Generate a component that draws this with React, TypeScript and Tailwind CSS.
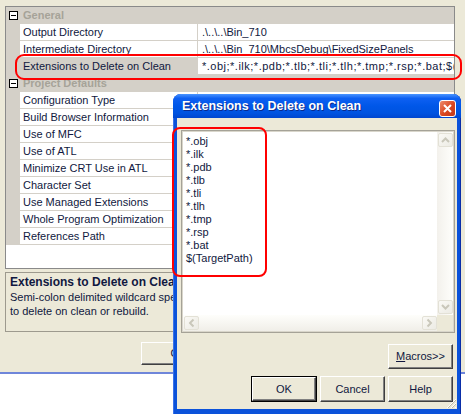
import React from "react";

const FONT = "font-['Liberation_Sans',Arial,sans-serif]";
const INK = "text-[#101840]";

type GridRow =
  | { kind: "cat"; label: string }
  | { kind: "prop"; name: string; value?: string; selected?: boolean };

const rows: GridRow[] = [
  { kind: "cat", label: "General" },
  { kind: "prop", name: "Output Directory", value: ".\\..\\..\\Bin_710" },
  {
    kind: "prop",
    name: "Intermediate Directory",
    value: ".\\..\\..\\Bin_710\\MbcsDebug\\FixedSizePanels",
  },
  {
    kind: "prop",
    name: "Extensions to Delete on Clean",
    value: "*.obj;*.ilk;*.pdb;*.tlb;*.tli;*.tlh;*.tmp;*.rsp;*.bat;$(TargetPath)",
    selected: true,
  },
  { kind: "cat", label: "Project Defaults" },
  { kind: "prop", name: "Configuration Type" },
  { kind: "prop", name: "Build Browser Information" },
  { kind: "prop", name: "Use of MFC" },
  { kind: "prop", name: "Use of ATL" },
  { kind: "prop", name: "Minimize CRT Use in ATL" },
  { kind: "prop", name: "Character Set" },
  { kind: "prop", name: "Use Managed Extensions" },
  { kind: "prop", name: "Whole Program Optimization" },
  { kind: "prop", name: "References Path" },
];

const extensions = [
  "*.obj",
  "*.ilk",
  "*.pdb",
  "*.tlb",
  "*.tli",
  "*.tlh",
  "*.tmp",
  "*.rsp",
  "*.bat",
  "$(TargetPath)",
];

function MinusBox() {
  return (
    <div className="flex h-[9px] w-[9px] items-center justify-center border border-[#000000] bg-white">
      <div className="h-[1px] w-[5px] bg-black" />
    </div>
  );
}

function Row({ row }: { row: GridRow }) {
  if (row.kind === "cat") {
    return (
      <div className="flex h-[17px]">
        <div className="flex w-[14px] shrink-0 items-center justify-center bg-[#D4D0C8]">
          <MinusBox />
        </div>
        <div className="flex-1 bg-[#D4D0C8] pl-[3px] text-[11px] font-bold leading-[17px] text-[#A6A398]">
          {row.label}
        </div>
      </div>
    );
  }
  return (
    <div className="flex h-[17px]">
      <div className="w-[14px] shrink-0 bg-[#D4D0C8]" />
      <div
        className={`w-[178px] shrink-0 border-b border-r border-[#D4D0C8] pl-[3px] text-[11px] leading-[16px] whitespace-nowrap ${INK} ${
          row.selected ? "bg-[#D4D0C8]" : "bg-white"
        }`}
      >
        {row.name}
      </div>
      <div
        className={`flex-1 overflow-hidden whitespace-nowrap border-b border-[#D4D0C8] pl-[4px] text-[11px] leading-[16px] ${INK} ${
          row.selected ? "tracking-[0.5px]" : ""
        }`}
      >
        {row.value}
      </div>
    </div>
  );
}

function ClassicButton({
  label,
  underline,
  isDefault,
  className = "",
}: {
  label: string;
  underline?: number;
  isDefault?: boolean;
  className?: string;
}) {
  const text =
    underline === undefined ? (
      label
    ) : (
      <>
        {label.slice(0, underline)}
        <span className="underline">{label[underline]}</span>
        {label.slice(underline + 1)}
      </>
    );
  return (
    <div className={`${isDefault ? "border border-black" : ""} ${className}`}>
      <div className="flex h-full w-full items-center justify-center border border-b-[#404040] border-l-white border-r-[#404040] border-t-white bg-[#ECE9D8] shadow-[inset_-1px_-1px_0_#808080] text-[11px] text-[#101840]">
        {text}
      </div>
    </div>
  );
}

function Chevron({ dir }: { dir: "up" | "down" | "left" | "right" }) {
  const rot = { up: "rotate-0", down: "rotate-180", left: "-rotate-90", right: "rotate-90" }[dir];
  return (
    <svg width="9" height="6" viewBox="0 0 9 6" className={rot}>
      <path d="M1 5 L4.5 1.5 L8 5" fill="none" stroke="#C9C7BA" strokeWidth="2" />
    </svg>
  );
}

function ScrollBtn({ dir }: { dir: "up" | "down" | "left" | "right" }) {
  return (
    <div className="flex h-[16px] w-[16px] items-center justify-center">
      <div className="flex h-[14px] w-[15px] items-center justify-center rounded-[2px] border border-[#E3E1D6] bg-[linear-gradient(135deg,#FAF9F5,#ECEBE4)]">
        <Chevron dir={dir} />
      </div>
    </div>
  );
}

function Dialog() {
  return (
    <div className="absolute left-[173px] top-[94px] flex h-[320px] w-[288px] flex-col rounded-t-[8px] bg-[#0B52DA] shadow-[inset_1px_0_0_#3A72E8,inset_-1px_0_0_#0A2EA8]">
      <div className="flex h-[24px] items-start justify-between rounded-t-[8px] bg-[linear-gradient(180deg,#4A95FF_0%,#0E60F2_18%,#0057E8_50%,#0053E0_80%,#0046CF_100%)] pl-[9px] pr-[5px]">
        <span className="mt-[5px] text-[12.5px] font-bold leading-[15px] text-white [text-shadow:1px_1px_0_#0B2A8C]">
          Extensions to Delete on Clean
        </span>
        <div className="mt-[6px] flex h-[17px] w-[17px] items-center justify-center rounded-[3px] border border-white bg-[linear-gradient(135deg,#EE8A6C,#D9451F_55%,#C2391A)]">
          <svg width="9" height="9" viewBox="0 0 9 9">
            <path d="M1 1 L8 8 M8 1 L1 8" stroke="white" strokeWidth="2" />
          </svg>
        </div>
      </div>

      <div className="relative mx-[4px] mb-[5px] flex flex-1 flex-col bg-[#ECE9D8] px-[4px] pt-[12px]">
        <div className="mr-[-2px] h-[203px] border border-[#A5A297]">
          <div className="grid h-full grid-cols-[1fr_16px] grid-rows-[1fr_16px] border border-[#D9D6CB] bg-white">
            <div className="pl-[3px] pt-[3px]">
              {extensions.map((ext) => (
                <div key={ext} className={`text-[11px] leading-[13px] ${INK}`}>
                  {ext}
                </div>
              ))}
            </div>
            <div className="flex flex-col justify-between bg-[linear-gradient(90deg,#F3F1EC,#FEFEFB)]">
              <ScrollBtn dir="up" />
              <ScrollBtn dir="down" />
            </div>
            <div className="flex justify-between bg-[linear-gradient(180deg,#FEFEFB,#F0EEE8)]">
              <ScrollBtn dir="left" />
              <ScrollBtn dir="right" />
            </div>
            <div className="bg-[#ECE9D8]" />
          </div>
        </div>

        <div className="mt-[11px] flex justify-end">
          <ClassicButton label="Macros>>" underline={0} className="h-[25px] w-[65px]" />
        </div>
        <div className="mt-[7px] flex justify-end gap-[3px]">
          <ClassicButton label="OK" isDefault className="h-[26px] w-[66px]" />
          <ClassicButton label="Cancel" className="h-[26px] w-[65px]" />
          <ClassicButton label="Help" className="h-[26px] w-[65px]" />
        </div>

        <svg className="absolute bottom-0 right-0" width="12" height="12" viewBox="0 0 12 12">
          <path d="M11 2 L2 11 M11 6 L6 11 M11 10 L10 11" stroke="#FFFFFF" strokeWidth="1" />
          <path d="M11 3 L3 11 M11 7 L7 11" stroke="#C1BDA9" strokeWidth="1" />
        </svg>
      </div>
    </div>
  );
}

export default function App() {
  return (
    <div className={`relative h-[414px] w-[465px] overflow-hidden bg-white ${FONT}`}>
      <div className="h-[374px] border-b-2 border-[#6F86DA] bg-[#ECE9D8] pl-[5px] pt-[6px]">
        <div className="h-[263px] w-[450px] border border-[#8A8A8A] bg-white">
          {rows.map((row, i) => (
            <Row key={i} row={row} />
          ))}
        </div>

        <div className="mt-[3px] h-[60px] w-[450px] overflow-hidden border border-[#9D9A8E] px-[4px] pt-[2px]">
          <div className={`whitespace-nowrap text-[12px] font-bold leading-[15px] ${INK}`}>
            Extensions to Delete on Clean
          </div>
          <div className={`whitespace-nowrap text-[11px] leading-[14px] ${INK}`}>
            Semi-colon delimited wildcard specification for which files in intermediate directory
          </div>
          <div className={`whitespace-nowrap text-[11px] leading-[14px] ${INK}`}>
            to delete on clean or rebuild.
          </div>
        </div>

        <div className="ml-[136px] mt-[10px] flex gap-[3px]">
          <ClassicButton label="OK" className="h-[23px] w-[75px]" />
          <ClassicButton label="Cancel" className="h-[23px] w-[75px]" />
        </div>
      </div>

      <Dialog />

      {/* red callouts */}
      <div className="pointer-events-none absolute left-[15px] top-[54px] h-[26px] w-[447px] rounded-[9px] border-2 border-[#FF0000]" />
      <div className="pointer-events-none absolute left-[172px] top-[127px] h-[150px] w-[95px] rounded-[8px] border-2 border-[#FF0000]" />
    </div>
  );
}
